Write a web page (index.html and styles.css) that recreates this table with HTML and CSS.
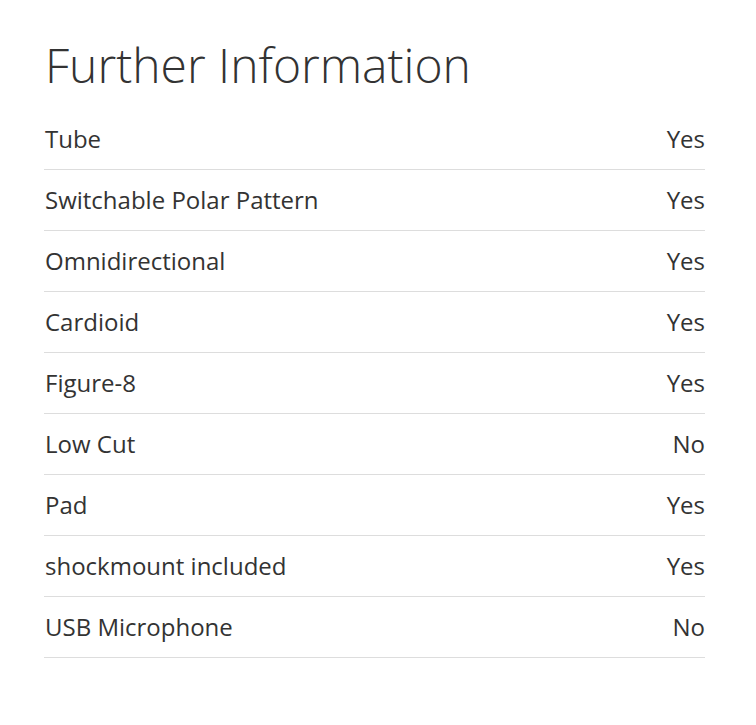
FILE: index.html
```html
<!DOCTYPE html>
<html>
<head>
<meta charset="utf-8">
<link rel="stylesheet" href="styles.css">
</head>
<body>
<section class="info">
  <h2 class="title">Further Information</h2>
  <ul class="specs">
    <li class="row"><span>Tube</span><span>Yes</span></li>
    <li class="row"><span>Switchable Polar Pattern</span><span>Yes</span></li>
    <li class="row"><span>Omnidirectional</span><span>Yes</span></li>
    <li class="row"><span>Cardioid</span><span>Yes</span></li>
    <li class="row"><span>Figure-8</span><span>Yes</span></li>
    <li class="row"><span>Low Cut</span><span>No</span></li>
    <li class="row"><span>Pad</span><span>Yes</span></li>
    <li class="row"><span>shockmount included</span><span>Yes</span></li>
    <li class="row"><span>USB Microphone</span><span>No</span></li>
  </ul>
</section>
</body>
</html>
```
FILE: styles.css
```css
html, body {
  margin: 0;
  padding: 0;
  background: #fff;
}
body {
  font-family: "Open Sans", sans-serif;
  color: #333;
}
.info {
  width: 661px;
  padding: 30px 0 0 44px;
}
.title {
  margin: 0 0 0 1px;
  font-weight: 300;
  font-size: 48px;
  line-height: 70px;
  color: #333;
  height: 79px;
}
.specs {
  list-style: none;
  margin: 0;
  padding: 0;
}
.row {
  display: flex;
  justify-content: space-between;
  align-items: center;
  height: 58px;
  padding: 0 0 2px 1px;
  border-bottom: 1px solid #ddd;
  font-size: 24px;
}
```
